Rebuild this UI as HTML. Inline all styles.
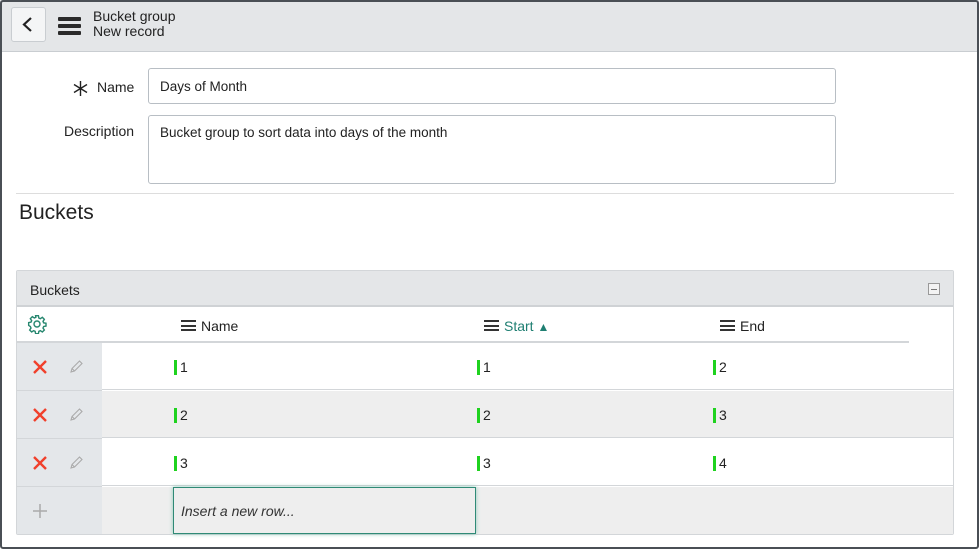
<!DOCTYPE html><html><head><style>
*{margin:0;padding:0;box-sizing:border-box}
body{width:979px;height:549px;overflow:hidden;font-family:"Liberation Sans",sans-serif;color:#222;background:#fff;position:relative}
.a{position:absolute}
.frame{position:absolute;left:0;top:0;width:979px;height:549px;border:2px solid #4a4f55;border-radius:3px;pointer-events:none}
.t{font-size:14px}
.bar{width:3px;height:15px;background:#1fd21f;display:inline-block;vertical-align:-3px;margin-right:3px}
.ham{display:inline-block;width:15px;height:11px;border-top:2.5px solid #333;border-bottom:2.5px solid #333;position:relative;vertical-align:0px;margin-right:5px}
.ham:after{content:"";position:absolute;left:0;right:0;top:2.5px;border-top:2.5px solid #333}
</style></head><body>
<div class="a" style="left:0;top:0;width:979px;height:52px;background:#e4e6e8;border-bottom:1px solid #c9cdd1"></div>
<div class="a" style="left:11px;top:7px;width:35px;height:35px;background:#f4f5f6;border:1px solid #c9cdd1;border-radius:3px"></div>
<svg class="a" style="left:21px;top:16px" width="14" height="17"><path d="M10 2 L3 8.5 L10 15" stroke="#222" stroke-width="2.2" fill="none"/></svg>
<div class="a" style="left:58px;top:17px;width:23px;height:4px;background:#2a2a2a;border-radius:1px"></div>
<div class="a" style="left:58px;top:24px;width:23px;height:4px;background:#2a2a2a;border-radius:1px"></div>
<div class="a" style="left:58px;top:31px;width:23px;height:4px;background:#2a2a2a;border-radius:1px"></div>
<div class="a t" style="left:93px;top:9px;line-height:15px">Bucket group<br>New record</div>

<svg class="a" style="left:72px;top:80px" width="17" height="17"><g stroke="#222" stroke-width="1.4"><path d="M8.5 1v15M2 4.5l13 8M2 12.5l13-8"/></g></svg>
<div class="a t" style="left:97px;top:79px">Name</div>
<div class="a t" style="left:64px;top:123px">Description</div>
<div class="a" style="left:148px;top:68px;width:688px;height:36px;border:1px solid #b8bec4;border-radius:3px;padding:10px 11px;font-size:13.5px">Days of Month</div>
<div class="a" style="left:148px;top:115px;width:688px;height:69px;border:1px solid #b8bec4;border-radius:3px;padding:9px 11px;font-size:13.5px">Bucket group to sort data into days of the month</div>
<div class="a" style="left:16px;top:193px;width:938px;border-top:1px solid #ddd"></div>
<div class="a" style="left:19px;top:201px;font-size:21px">Buckets</div>

<div class="a" style="left:16px;top:270px;width:938px;height:265px;border:1px solid #d3d6d9;border-radius:2px;background:#fff"></div>
<div class="a" style="left:17px;top:271px;width:936px;height:36px;background:#e4e6e8;border-bottom:2px solid #cfd2d5"></div>
<div class="a t" style="left:30px;top:282px">Buckets</div>
<div class="a" style="left:928px;top:283px;width:12px;height:12px;border:1px solid #999;background:#f3f3f3"></div>
<div class="a" style="left:931px;top:289px;width:6px;border-top:1px solid #777"></div>
<svg class="a" style="left:27px;top:314px" width="20" height="20" viewBox="0 0 24 24"><path fill="none" stroke="#27876f" stroke-width="1.7" d="M10.3 2h3.4l.5 2.8 1.8.8 2.4-1.6 2.4 2.4-1.6 2.4.8 1.8 2.8.5v3.4l-2.8.5-.8 1.8 1.6 2.4-2.4 2.4-2.4-1.6-1.800.8-.5 2.8h-3.4l-.5-2.8-1.8-.8-2.4 1.6-2.4-2.4 1.6-2.4-.8-1.8L2 13.7v-3.4l2.8-.5.8-1.8L4 5.6 6.4 3.2l2.4 1.6 1.8-.8z"/><circle cx="12" cy="12" r="3.6" fill="none" stroke="#27876f" stroke-width="1.7"/></svg>
<div class="a t" style="left:181px;top:318px"><span class="ham"></span>Name</div>
<div class="a t" style="left:484px;top:318px;color:#1f7f72"><span class="ham"></span>Start <span style="font-size:12px">&#9650;</span></div>
<div class="a t" style="left:720px;top:318px"><span class="ham"></span>End</div>
<div class="a" style="left:17px;top:341px;width:892px;border-top:2px solid #d3d6d9"></div>

<div class="a" style="left:17px;top:343px;width:936px;height:47px;background:#fff;border-bottom:1px solid #d3d6d9"></div>
<div class="a" style="left:17px;top:391px;width:936px;height:47px;background:#eeeeee;border-bottom:1px solid #d3d6d9"></div>
<div class="a" style="left:17px;top:439px;width:936px;height:47px;background:#fff;border-bottom:1px solid #d3d6d9"></div>
<div class="a" style="left:17px;top:487px;width:936px;height:47px;background:#eeeeee"></div>
<div class="a" style="left:17px;top:343px;width:85px;height:191px;background:#e4e7ea"></div>
<div class="a" style="left:17px;top:390px;width:85px;border-top:1px solid #d3d6d9"></div>
<div class="a" style="left:17px;top:438px;width:85px;border-top:1px solid #d3d6d9"></div>
<div class="a" style="left:17px;top:486px;width:85px;border-top:1px solid #d3d6d9"></div>

<svg class="a" style="left:33px;top:360px" width="14" height="14"><path d="M1 1L13 13M13 1L1 13" stroke="#f0402c" stroke-width="2.4"/></svg>
<svg class="a" style="left:33px;top:408px" width="14" height="14"><path d="M1 1L13 13M13 1L1 13" stroke="#f0402c" stroke-width="2.4"/></svg>
<svg class="a" style="left:33px;top:456px" width="14" height="14"><path d="M1 1L13 13M13 1L1 13" stroke="#f0402c" stroke-width="2.4"/></svg>
<svg class="a" style="left:69px;top:360px" width="14" height="14"><path d="M2 12l1-3.5 7.5-7.5 2.5 2.5-7.5 7.5z M3 8.5l2.5 2.5" stroke="#aaa" stroke-width="1.1" fill="none"/></svg>
<svg class="a" style="left:69px;top:408px" width="14" height="14"><path d="M2 12l1-3.5 7.5-7.5 2.5 2.5-7.5 7.5z M3 8.5l2.5 2.5" stroke="#aaa" stroke-width="1.1" fill="none"/></svg>
<svg class="a" style="left:69px;top:456px" width="14" height="14"><path d="M2 12l1-3.5 7.5-7.5 2.5 2.5-7.5 7.5z M3 8.5l2.5 2.5" stroke="#aaa" stroke-width="1.1" fill="none"/></svg>
<svg class="a" style="left:33px;top:504px" width="14" height="14"><path d="M7 0v14M0 7h14" stroke="#aaa" stroke-width="1.5"/></svg>

<div class="a t" style="left:174px;top:359px"><span class="bar"></span>1</div>
<div class="a t" style="left:477px;top:359px"><span class="bar"></span>1</div>
<div class="a t" style="left:713px;top:359px"><span class="bar"></span>2</div>
<div class="a t" style="left:174px;top:407px"><span class="bar"></span>2</div>
<div class="a t" style="left:477px;top:407px"><span class="bar"></span>2</div>
<div class="a t" style="left:713px;top:407px"><span class="bar"></span>3</div>
<div class="a t" style="left:174px;top:455px"><span class="bar"></span>3</div>
<div class="a t" style="left:477px;top:455px"><span class="bar"></span>3</div>
<div class="a t" style="left:713px;top:455px"><span class="bar"></span>4</div>
<div class="a t" style="left:173px;top:487px;width:303px;height:47px;border:1px solid #2f8a76;box-shadow:0 0 4px #8cc9b8;background:#eee;padding:15px 7px;font-style:italic;color:#333">Insert a new row...</div>
<div class="frame"></div>
</body></html>
